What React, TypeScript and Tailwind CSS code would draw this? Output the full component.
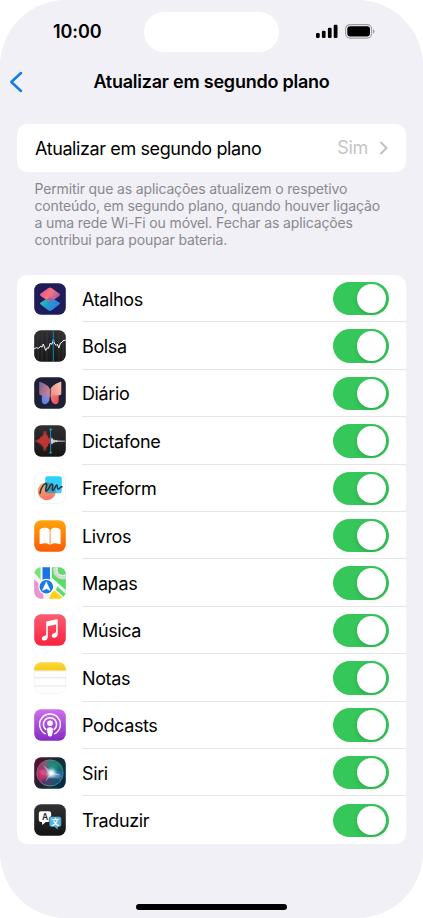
import React, { useState } from 'react';

const IconFrame: React.FC<{ id: string; children: React.ReactNode }> = ({ id, children }) => (
  <svg viewBox="0 0 32 32" className="size-8 shrink-0">
    <clipPath id={id}>
      <rect x="0.2" y="0.2" width="31.6" height="31.6" rx="7" />
    </clipPath>
    <g clipPath={`url(#${id})`}>{children}</g>
  </svg>
);

const ShortcutsIcon = () => (
  <IconFrame id="clip-shortcuts">
    <defs>
      <linearGradient id="sc-top" x1="0" y1="0.3" x2="1" y2="0.7">
        <stop offset="0" stopColor="#ee4f93" />
        <stop offset="0.5" stopColor="#f0787f" />
        <stop offset="1" stopColor="#a04fa6" />
      </linearGradient>
      <linearGradient id="sc-bottom" x1="0" y1="0" x2="1" y2="0.5">
        <stop offset="0" stopColor="#35cba4" />
        <stop offset="0.5" stopColor="#1fa3c8" />
        <stop offset="1" stopColor="#3478e8" />
      </linearGradient>
    </defs>
    <rect width="32" height="32" fill="#1e1c59" />
    <path d="M14.6 14.4 Q16 13.5 17.4 14.4 L25.3 19.4 Q26.8 20.5 25.3 21.6 L17.8 27.3 Q16 28.6 14.2 27.3 L6.7 21.6 Q5.2 20.5 6.7 19.4 Z" fill="url(#sc-bottom)" />
    <path d="M14.2 5.2 Q16 4 17.8 5.2 L25.3 10.6 Q26.8 11.8 25.3 12.9 L17.8 18.2 Q16 19.4 14.2 18.2 L6.7 12.9 Q5.2 11.8 6.7 10.6 Z" fill="url(#sc-top)" />
    <path d="M12 16.7 L16 14 L20 16.6 L16 19.2 Z" fill="#8b62b6" opacity="0.8" />
  </IconFrame>
);

const StocksIcon = () => (
  <IconFrame id="clip-stocks">
    <defs>
      <linearGradient id="stocks-bg" x1="0" y1="0" x2="0" y2="1">
        <stop offset="0" stopColor="#303032" />
        <stop offset="1" stopColor="#171718" />
      </linearGradient>
    </defs>
    <rect width="32" height="32" fill="url(#stocks-bg)" />
    <path d="M4 0V32M8 0V32M13 0V32M25 0V32M29 0V32" stroke="#46484a" strokeWidth="0.5" />
    <path d="M19.3 0V32" stroke="#137ca9" strokeWidth="1.1" />
    <path d="M0 18.8 L2.5 17.7 L4.5 18.4 L6.7 16.2 L8 17.2 L9.3 14 L10.4 17 L11.7 20.4 L13.2 17.8 L14.4 18.4 L16.4 13 L17.6 14.4 L19.3 10.8 L21 14.4 L22.3 15.3 L23.3 14.3 L24.8 18 L26.5 13 L28 12.3 L29 10.7 L32 10" fill="none" stroke="#fff" strokeWidth="1" strokeLinejoin="round" />
    <circle cx="19.3" cy="10.7" r="1.5" fill="#1a9bd3" />
  </IconFrame>
);

const JournalIcon = () => (
  <IconFrame id="clip-journal">
    <defs>
      <linearGradient id="jr-left" x1="0" y1="0" x2="1" y2="0.5">
        <stop offset="0" stopColor="#78618f" />
        <stop offset="1" stopColor="#cd8197" />
      </linearGradient>
      <linearGradient id="jr-right" x1="0" y1="0.7" x2="1" y2="0">
        <stop offset="0" stopColor="#ee9089" />
        <stop offset="1" stopColor="#f9c6ae" />
      </linearGradient>
      <linearGradient id="jr-blue" x1="0" y1="1" x2="1" y2="0">
        <stop offset="0" stopColor="#5378ed" />
        <stop offset="1" stopColor="#9a91d8" />
      </linearGradient>
      <linearGradient id="jr-red" x1="0" y1="0" x2="1" y2="1">
        <stop offset="0" stopColor="#ed827f" />
        <stop offset="1" stopColor="#f04848" />
      </linearGradient>
    </defs>
    <rect width="32" height="32" fill="#1e2036" />
    <path d="M7.8 17 L15.8 19.5 Q15.5 27 10.5 27.2 Q7.8 27 7.8 23 Z" fill="url(#jr-blue)" />
    <path d="M24.7 17 L16.7 19.5 Q17 27 21.9 27.2 Q24.7 27 24.7 23 Z" fill="url(#jr-red)" />
    <path d="M5.2 5.8 Q5.2 4.5 6.5 4.9 Q14.4 7.6 15.9 12 L15.9 20 Q12.5 17.6 7 18.3 Q5.2 18.3 5.2 16.5 Z" fill="url(#jr-left)" />
    <path d="M27.3 5.8 Q27.3 4.5 26 4.9 Q18.1 7.6 16.6 12 L16.6 20 Q20 17.6 25.5 18.3 Q27.3 18.3 27.3 16.5 Z" fill="url(#jr-right)" />
  </IconFrame>
);

const VoiceMemosIcon = () => (
  <IconFrame id="clip-memos">
    <defs>
      <linearGradient id="memos-bg" x1="0" y1="0" x2="0" y2="1">
        <stop offset="0" stopColor="#303032" />
        <stop offset="1" stopColor="#161617" />
      </linearGradient>
    </defs>
    <rect width="32" height="32" fill="url(#memos-bg)" />
    <path d="M1 16 L3.5 15.4 L4.5 13.9 L5.3 15 L6.3 11.8 L7 13.3 L8 10.5 L9 11.8 L10 5.8 L11 8.8 L11.9 5.9 L12.7 11.2 L13.6 10 L14.3 13.8 L15.5 12.8 L16.5 15 V17 L15.3 18.7 L14.2 18.2 L13.6 21.8 L12.7 20.8 L11.8 25.8 L11 22.5 L10 26.2 L9 20.3 L8 21.7 L7 18.5 L6 19.6 L5.1 17.1 L4 18.1 L3 16.7 Z" fill="#bd3734" stroke="#bd3734" strokeWidth="0.4" />
    <path d="M17 12 L18 14 L18.6 12.7 L19.2 14.9 L20.2 14.3 L21 15.4 L22.3 14.7 L23 15.5 L31 15.7 V16.4 L23.5 16.7 L22.5 17.3 L21.2 16.8 L20.3 17.9 L19.4 17.3 L18.6 19.4 L18 18 L17 19.8 Z" fill="#d4d4d4" />
    <path d="M16.6 4.5V27.5" stroke="#228ebb" strokeWidth="0.9" />
    <circle cx="16.6" cy="4.5" r="1.2" fill="#249acb" />
    <circle cx="16.6" cy="27.5" r="1.2" fill="#249acb" />
  </IconFrame>
);

const FreeformIcon = () => (
  <IconFrame id="clip-freeform">
    <defs>
      <linearGradient id="ff-circle" x1="0" y1="0" x2="0" y2="1">
        <stop offset="0" stopColor="#ffb05b" />
        <stop offset="1" stopColor="#fa706d" />
      </linearGradient>
      <linearGradient id="ff-square" x1="0" y1="0" x2="0" y2="1">
        <stop offset="0" stopColor="#28d4fc" />
        <stop offset="1" stopColor="#4cc3f1" />
      </linearGradient>
      <clipPath id="ff-overlap">
        <circle cx="12.8" cy="19.2" r="9" />
      </clipPath>
    </defs>
    <rect width="32" height="32" fill="#fff" />
    <circle cx="12.8" cy="19.2" r="9" fill="url(#ff-circle)" />
    <rect x="11.2" y="4.2" width="16.6" height="17" rx="2.3" fill="url(#ff-square)" />
    <rect x="11.2" y="4.2" width="16.6" height="17" rx="2.3" fill="#5399aa" clipPath="url(#ff-overlap)" />
    <path d="M6 21.2 C6.8 15.5 10.2 11.4 12.2 11.5 C14.2 11.8 10.3 18.8 12.1 19 C14.3 19.2 15.8 12.2 18 12.1 C20 12.2 17 18.5 18.9 18.5 C20.9 18.2 21.2 13 22.8 13.1 C24.2 13.2 22.5 17 24.1 17.1 C25.8 17 26.2 14.7 28 14.8" fill="none" stroke="#15384c" strokeWidth="1.5" strokeLinecap="round" />
    <rect x="0.5" y="0.5" width="31" height="31" rx="6.7" fill="none" stroke="#e8e8eb" strokeWidth="0.7" />
  </IconFrame>
);

const BooksIcon = () => (
  <IconFrame id="clip-books">
    <defs>
      <linearGradient id="books-bg" x1="0" y1="0" x2="0" y2="1">
        <stop offset="0" stopColor="#ffa40b" />
        <stop offset="1" stopColor="#fb5b06" />
      </linearGradient>
    </defs>
    <rect width="32" height="32" fill="url(#books-bg)" />
    <path d="M15.7 24 V10.4 Q15.7 9.8 15.1 9.3 C12.7 7.2 9 7.4 6.5 8.9 Q5.6 9.4 5.6 10.4 V23.2 Q5.6 24.4 6.8 23.9 C10 22.8 12.8 22.8 15.7 24.7 Z" fill="#fff" />
    <path d="M16.5 24 V10.4 Q16.5 9.8 17.1 9.3 C19.5 7.2 23.2 7.4 25.7 8.9 Q26.6 9.4 26.6 10.4 V23.2 Q26.6 24.4 25.4 23.9 C22.2 22.8 19.4 22.8 16.5 24.7 Z" fill="#fff" />
  </IconFrame>
);

const MapsIcon = () => (
  <IconFrame id="clip-maps">
    <rect width="32" height="32" fill="#f4f4f1" />
    <path d="M0 0H6.8V13L0 5.5Z" fill="#77e477" />
    <path d="M17.5 0H32V25L17.5 11Z" fill="#5bdc69" />
    <path d="M0 12 Q10 20 9.5 32 H0Z" fill="#ec93d1" />
    <path d="M15 32 L18 24.5 L21 24 L30 32Z" fill="#ffcf18" />
    <path d="M22 23 L32 32 V26 L24 17.5Z" fill="#5bdc69" />
    <path d="M17 12 L34 27" stroke="#fff" strokeWidth="2.8" />
    <circle cx="28.5" cy="3" r="7.2" fill="none" stroke="#d8dad8" strokeWidth="4.2" />
    <circle cx="28.5" cy="3" r="5.6" fill="none" stroke="#f7f7f7" strokeWidth="0.8" />
    <path d="M8.3 0H16V18H8.3Z" fill="#1e72e8" />
    <path d="M7.5 0V16M16.8 0V16" stroke="#fff" strokeWidth="1.5" />
    <circle cx="12.3" cy="19.7" r="8" fill="#fff" />
    <circle cx="12.3" cy="19.7" r="6.8" fill="#1879e9" />
    <path d="M12.3 14.7 L16.2 23.5 L12.3 21.7 L8.4 23.5 Z" fill="#fff" stroke="#fff" strokeWidth="0.5" strokeLinejoin="round" />
  </IconFrame>
);

const MusicIcon = () => (
  <IconFrame id="clip-music">
    <defs>
      <linearGradient id="music-bg" x1="0" y1="0" x2="0" y2="1">
        <stop offset="0" stopColor="#fb5d72" />
        <stop offset="1" stopColor="#f9233d" />
      </linearGradient>
    </defs>
    <rect width="32" height="32" fill="url(#music-bg)" />
    <path d="M12.2 8.3 Q12.3 7.4 13.2 7.2 L22.6 5.3 Q23.7 5.1 23.7 6.1 V20.2 Q23.6 23 20.7 23.7 Q18.3 24 17.8 22.2 Q17.5 19.9 20.2 19.2 Q22.1 18.9 22.1 17.5 V10.6 L13.8 12.3 V23.1 Q13.6 26.1 10.6 26.6 Q8.2 26.8 7.8 25 Q7.5 22.7 10.2 22 Q12.2 21.7 12.2 20.2 Z" fill="#fff" />
  </IconFrame>
);

const NotesIcon = () => (
  <IconFrame id="clip-notes">
    <defs>
      <linearGradient id="notes-top" x1="0" y1="0" x2="0" y2="1">
        <stop offset="0" stopColor="#fcd944" />
        <stop offset="1" stopColor="#f8ca13" />
      </linearGradient>
    </defs>
    <rect width="32" height="32" fill="#fefefe" />
    <rect width="32" height="8.5" fill="url(#notes-top)" />
    <path d="M0 9H32" stroke="#c9c8c4" strokeWidth="0.5" strokeDasharray="0.8 0.6" />
    <path d="M0 15.8H32M0 24H32" stroke="#d9d9db" strokeWidth="0.7" />
    <path d="M0.4 9V24.8A6.8 6.8 0 0 0 7.2 31.6H24.8A6.8 6.8 0 0 0 31.6 24.8V9" fill="none" stroke="#ececef" strokeWidth="0.6" />
  </IconFrame>
);

const PodcastsIcon = () => (
  <IconFrame id="clip-podcasts">
    <defs>
      <linearGradient id="pod-bg" x1="0" y1="0" x2="0" y2="1">
        <stop offset="0" stopColor="#ce70ed" />
        <stop offset="1" stopColor="#842bc4" />
      </linearGradient>
    </defs>
    <rect width="32" height="32" fill="url(#pod-bg)" />
    <g fill="none" stroke="#fff" strokeLinecap="round">
      <path d="M11.4 24.8 A10.4 10.4 0 1 1 20.6 24.8" strokeWidth="1.4" />
      <path d="M11.8 20.4 A6.6 6.6 0 1 1 20.2 20.4" strokeWidth="1.5" />
    </g>
    <circle cx="16" cy="14.3" r="2.8" fill="#fff" />
    <path d="M13.1 20.2 Q13.1 18.2 16 18.2 Q18.9 18.2 18.9 20.2 Q18.9 23.5 18 26.3 Q17.6 27.5 16 27.5 Q14.4 27.5 14 26.3 Q13.1 23.5 13.1 20.2Z" fill="#fff" />
  </IconFrame>
);

const SiriIcon = () => (
  <IconFrame id="clip-siri">
    <defs>
      <linearGradient id="siri-bg" x1="0" y1="0.2" x2="1" y2="0.8">
        <stop offset="0" stopColor="#5c0f30" />
        <stop offset="0.45" stopColor="#1d2334" />
        <stop offset="0.7" stopColor="#07343c" />
        <stop offset="1" stopColor="#06284c" />
      </linearGradient>
      <linearGradient id="siri-orb" x1="0" y1="0.6" x2="1" y2="0.4">
        <stop offset="0" stopColor="#b3215b" />
        <stop offset="0.4" stopColor="#974f76" />
        <stop offset="0.6" stopColor="#277e8a" />
        <stop offset="1" stopColor="#116171" />
      </linearGradient>
      <radialGradient id="siri-glow">
        <stop offset="0" stopColor="#fff" />
        <stop offset="0.3" stopColor="#e9fbff" stopOpacity="0.9" />
        <stop offset="1" stopColor="#73cbdc" stopOpacity="0" />
      </radialGradient>
      <radialGradient id="siri-blue">
        <stop offset="0" stopColor="#38a0f0" />
        <stop offset="1" stopColor="#0b5eab" stopOpacity="0" />
      </radialGradient>
      <radialGradient id="siri-green">
        <stop offset="0" stopColor="#23957a" />
        <stop offset="1" stopColor="#1d8367" stopOpacity="0" />
      </radialGradient>
      <radialGradient id="siri-pink">
        <stop offset="0" stopColor="#ee3f83" />
        <stop offset="1" stopColor="#c52563" stopOpacity="0" />
      </radialGradient>
    </defs>
    <rect width="32" height="32" fill="url(#siri-bg)" />
    <circle cx="16" cy="16" r="13" fill="url(#siri-orb)" />
    <ellipse cx="19" cy="8.5" rx="10" ry="6" fill="url(#siri-green)" />
    <ellipse cx="17" cy="24.5" rx="9" ry="4" fill="#133562" opacity="0.6" />
    <ellipse cx="8.5" cy="17" rx="7" ry="6.5" fill="url(#siri-pink)" />
    <ellipse cx="23" cy="17.8" rx="7.5" ry="5.5" fill="url(#siri-blue)" />
    <path d="M4 15 C10 9 17 15 28 19 C20 25 15 19 4 15Z" fill="#d67faa" opacity="0.35" />
    <path d="M9 8 L18 15 L27 18 L18 18 L11 25 L15 17 Z" fill="#dcf4f5" opacity="0.45" />
    <circle cx="17.5" cy="16" r="6.5" fill="url(#siri-glow)" />
    <circle cx="16" cy="16" r="13.2" fill="none" stroke="#69a397" strokeWidth="0.8" opacity="0.8" />
  </IconFrame>
);

const TranslateIcon = () => (
  <IconFrame id="clip-translate">
    <defs>
      <linearGradient id="tr-bg" x1="0" y1="0" x2="0" y2="1">
        <stop offset="0" stopColor="#323234" />
        <stop offset="1" stopColor="#141415" />
      </linearGradient>
    </defs>
    <rect width="32" height="32" fill="url(#tr-bg)" />
    <path d="M7 7.3H15Q17.2 7.3 17.2 9.5V15.8Q17.2 18 15 18H11.8L8.8 20.6Q8 21 8 20V18H7Q4.8 18 4.8 15.8V9.5Q4.8 7.3 7 7.3Z" fill="#fff" />
    <path d="M17.5 12.4H25Q27.4 12.4 27.4 14.7V20.7Q27.4 23 25 23H24V25Q23.6 25.8 22.8 25L20.5 23H17.5Q15.2 23 15.2 20.7V14.7Q15.2 12.4 17.5 12.4Z" fill="#58b4dc" stroke="#232325" strokeWidth="0.5" />
    <text x="11" y="15.8" textAnchor="middle" fontSize="8.5" fontWeight="600" fontFamily="Inter, sans-serif" fill="#29292b">A</text>
    <text x="21.3" y="20.6" textAnchor="middle" fontSize="7.5" fontWeight="700" fontFamily="'Noto Sans CJK SC', sans-serif" fill="#fff">文</text>
  </IconFrame>
);

const apps = [
  { name: 'Atalhos', Icon: ShortcutsIcon },
  { name: 'Bolsa', Icon: StocksIcon },
  { name: 'Diário', Icon: JournalIcon },
  { name: 'Dictafone', Icon: VoiceMemosIcon },
  { name: 'Freeform', Icon: FreeformIcon },
  { name: 'Livros', Icon: BooksIcon },
  { name: 'Mapas', Icon: MapsIcon },
  { name: 'Música', Icon: MusicIcon },
  { name: 'Notas', Icon: NotesIcon },
  { name: 'Podcasts', Icon: PodcastsIcon },
  { name: 'Siri', Icon: SiriIcon },
  { name: 'Traduzir', Icon: TranslateIcon },
];

const Toggle: React.FC<{ label: string }> = ({ label }) => {
  const [on, setOn] = useState(true);

  return (
    <button
      type="button"
      role="switch"
      aria-checked={on}
      aria-label={label}
      onClick={() => setOn(!on)}
      className={`mt-px flex h-[33.5px] w-[55.5px] shrink-0 items-center rounded-full px-[2.5px] ${on ? 'justify-end bg-[#35c759]' : 'justify-start bg-[#e9e9ea]'}`}
    >
      <span className="size-[29.5px] rounded-full bg-white shadow-[0_2px_5px_rgba(0,0,0,0.15)]" />
    </button>
  );
};

const StatusBar = () => (
  <div className="flex h-[52px] items-start pt-3">
    <div className="w-[144px] pt-[7px] pl-[53px] text-[18px] leading-[26px] font-semibold tracking-[-0.1px]">10:00</div>
    <div className="h-10 w-[134.5px] rounded-full bg-white" />
    <div className="flex items-start pt-3 pl-[37.5px]">
      <svg viewBox="0 0 22 15" className="h-[15px] w-[22px]">
        <rect x="0" y="9.1" width="3.7" height="4.9" rx="1.2" />
        <rect x="5.9" y="6.8" width="3.7" height="7.2" rx="1.2" />
        <rect x="11.9" y="3.7" width="3.7" height="10.3" rx="1.2" />
        <rect x="17.7" y="0.8" width="3.8" height="13.2" rx="1.2" />
      </svg>
      <svg viewBox="0 0 31 15" className="ml-[7px] h-[15px] w-[31px]">
        <rect x="0.6" y="0.6" width="26" height="13.5" rx="4.3" fill="none" stroke="#9f9fa3" strokeWidth="1.1" />
        <rect x="2.3" y="2.3" width="22.7" height="10.1" rx="2.8" />
        <path d="M28 5.4 Q29.7 6 29.7 7.4 T28 9.6Z" fill="#9f9fa3" />
      </svg>
    </div>
  </div>
);

const App: React.FC = () => {
  return (
    <div className="h-[918px] w-[423px] bg-white">
      <div className="flex h-full flex-col overflow-hidden rounded-[66px] bg-[#f1f0f6] font-['Inter','Liberation_Sans',sans-serif] text-black">
        <StatusBar />

        {/* Navigation bar */}
        <header className="grid h-[60px] grid-cols-[40px_1fr_40px] items-center">
          <svg viewBox="0 0 14 22" className="ml-[9px] h-[22px] w-[14px]">
            <path d="M12 2 L2.3 11 L12 20" fill="none" stroke="#147ce9" strokeWidth="2.5" strokeLinecap="round" strokeLinejoin="round" />
          </svg>
          <h1 className="pb-0.5 text-center text-[18px] font-semibold tracking-[-0.23px]">Atualizar em segundo plano</h1>
        </header>

        <main className="px-[17px] pt-3">
          <div className="flex h-[47.5px] items-center rounded-[10px] bg-white pr-[17px] pl-[18px]">
            <span className="flex-1 pt-0.5 text-[18px] tracking-[-0.4px]">Atualizar em segundo plano</span>
            <span className="text-[18px] tracking-[-0.35px] text-[#c5c5c8]">Sim</span>
            <svg viewBox="0 0 10 14" className="ml-[11px] h-[14px] w-[10px]">
              <path d="M2 1.5 L7.5 7 L2 12.5" fill="none" stroke="#c1c1c5" strokeWidth="2" strokeLinecap="round" strokeLinejoin="round" />
            </svg>
          </div>

          <p className="mt-2 h-[70px] pl-[17.5px] text-[14px] leading-[17.3px] tracking-[-0.14px] whitespace-nowrap text-[#89898e]">
            Permitir que as aplicações atualizem o respetivo<br />
            conteúdo, em segundo plano, quando houver ligação<br />
            a uma rede Wi-Fi ou móvel. Fechar as aplicações<br />
            contribui para poupar bateria.
          </p>

          {/* Apps list */}
          <ul className="mt-[25.5px] overflow-hidden rounded-[10px] bg-white">
            {apps.map(({ name, Icon }, idx) => (
              <li key={name} className="flex h-[47.4px] items-center pl-[17px]">
                <Icon />
                <div className={`ml-4 flex h-full flex-1 items-center justify-between pr-[17.5px] ${idx < apps.length - 1 ? 'border-b border-[#e5e5e8]' : ''}`}>
                  <span className="pt-0.5 text-[18px] tracking-[-0.38px]">{name}</span>
                  <Toggle label={name} />
                </div>
              </li>
            ))}
          </ul>
        </main>

        <div className="mx-auto mt-auto mb-[8.5px] h-[5.5px] w-[151px] rounded-full bg-black" />
      </div>
    </div>
  );
};

export default App;
